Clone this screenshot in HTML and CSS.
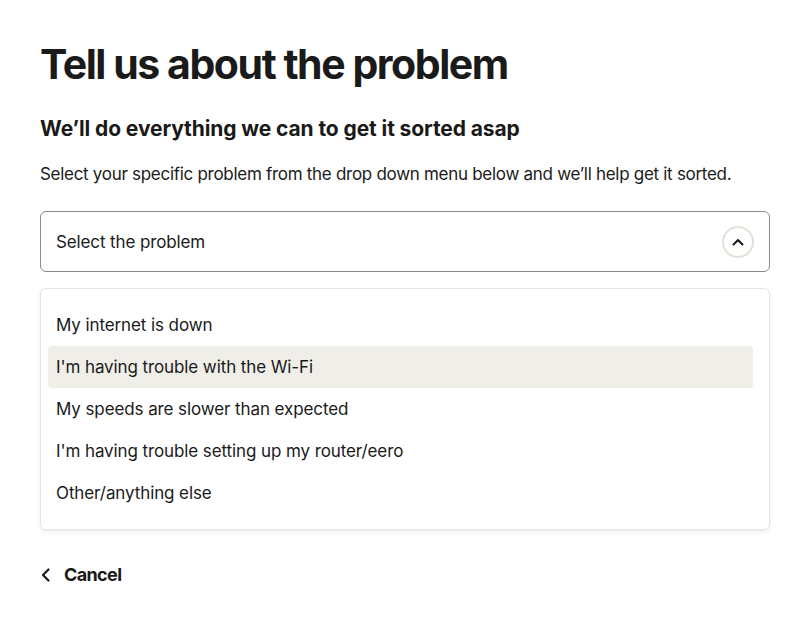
FILE: index.html
```html
<!DOCTYPE html>
<html lang="en">
<head>
    <meta charset="UTF-8">
    <title>Tell us about the problem</title>
    <link rel="stylesheet" href="styles.css">
</head>
<body>
    <div class="page">
        <h1 class="title">Tell us about the problem</h1>
        <h2 class="subtitle">We’ll do everything we can to get it sorted asap</h2>
        <p class="intro">Select your specific problem from the drop down menu below and we’ll help get it sorted.</p>

        <div class="select">
            <span>Select the problem</span>
            <span class="select-toggle">
                <svg width="14" height="14" viewBox="0 0 14 14"><path d="M2.5 9.5 L7 5 L11.5 9.5" fill="none" stroke="#1a1a1a" stroke-width="2" stroke-linecap="round" stroke-linejoin="round"/></svg>
            </span>
        </div>

        <ul class="options">
            <li>My internet is down</li>
            <li class="active">I'm having trouble with the Wi-Fi</li>
            <li>My speeds are slower than expected</li>
            <li>I'm having trouble setting up my router/eero</li>
            <li>Other/anything else</li>
        </ul>

        <a class="cancel" href="#">
            <svg width="12" height="16" viewBox="0 0 12 16"><path d="M8.5 2.5 L3 8 L8.5 13.5" fill="none" stroke="#1a1a1a" stroke-width="2.2" stroke-linecap="round" stroke-linejoin="round"/></svg>
            Cancel
        </a>
    </div>
</body>
</html>
```

FILE: styles.css
```css
body {
    margin: 0;
    background: #fff;
    color: #1a1a1a;
    font-family: Inter, "Noto Sans", sans-serif;
}

.page {
    padding: 38px 40px 0 40px;
    width: 730px;
}

.title {
    font-size: 41px;
    font-weight: 700;
    letter-spacing: -1.45px;
    line-height: 52px;
    margin: 0 0 26px 0;
}

.subtitle {
    font-size: 21px;
    font-weight: 700;
    letter-spacing: -0.1px;
    line-height: 26px;
    margin: 0 0 19px 0;
}

.intro {
    font-size: 17px;
    letter-spacing: -0.29px;
    line-height: 26px;
    margin: 0 0 24px 0;
}

.select {
    display: flex;
    align-items: center;
    justify-content: space-between;
    height: 59px;
    padding: 0 15px;
    border: 1px solid #8a8a8a;
    border-radius: 6px;
    font-size: 17px;
    letter-spacing: -0.12px;
}

.select-toggle {
    display: flex;
    align-items: center;
    justify-content: center;
    width: 28px;
    height: 28px;
    border: 2px solid #e3e0d6;
    border-radius: 50%;
}

.options {
    list-style: none;
    margin: 16px 0 0 0;
    padding: 15px 16px 15px 7px;
    border: 1px solid #e6e4dc;
    border-radius: 6px;
    box-shadow: 0 2px 4px rgba(0, 0, 0, 0.08);
}

.options li {
    height: 42px;
    line-height: 42px;
    padding: 0 8px;
    font-size: 17px;
    letter-spacing: -0.1px;
    border-radius: 4px;
}

.options li.active {
    background: #efeee8;
}

.cancel {
    display: inline-flex;
    align-items: center;
    gap: 12px;
    margin-top: 34px;
    color: #1a1a1a;
    text-decoration: none;
    font-size: 18px;
    font-weight: 700;
    letter-spacing: -0.63px;
}
```
